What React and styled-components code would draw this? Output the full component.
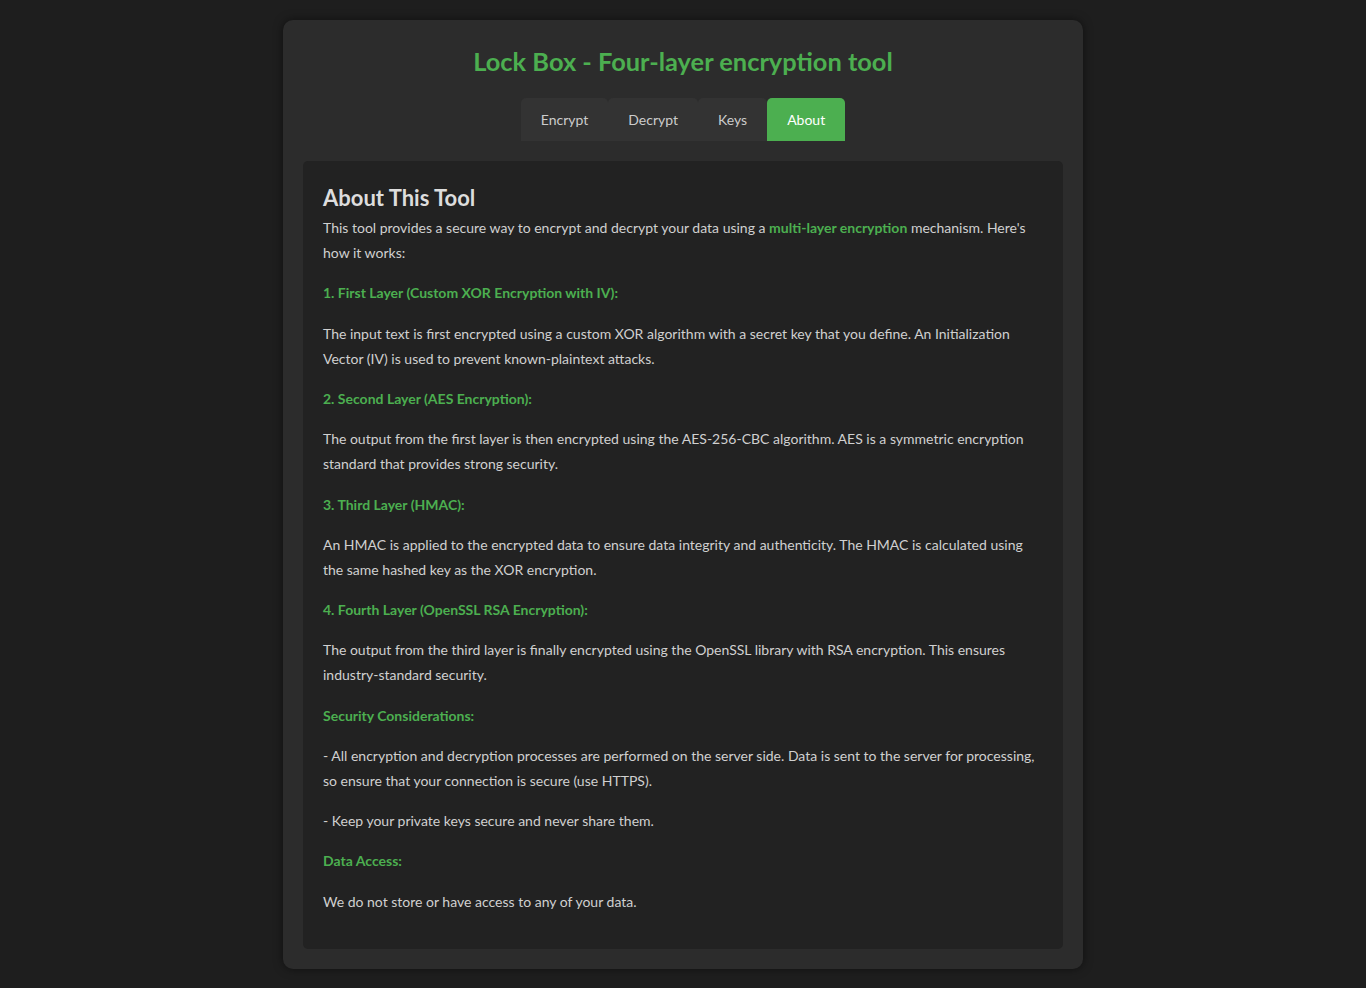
import React, { useState } from 'react'
import styled, { createGlobalStyle } from 'styled-components';

const GlobalStyle = createGlobalStyle`
  body {
    margin: 0;
    background-color: #1e1e1e;
    font-family: Lato, "Open Sans", sans-serif;
    color: #d0d0d0;
  }
`;

const Page = styled.div`
  padding: 20px 0;
  display: flex;
  justify-content: center;
`;

const Container = styled.div`
  width: 800px;
  box-sizing: border-box;
  padding: 20px;
  background-color: #2c2c2c;
  border-radius: 10px;
  box-shadow: 0 0 10px rgba(0, 0, 0, 0.5);
  display: flex;
  flex-direction: column;
  align-items: center;
`;

const Title = styled.h1`
  margin: 0 0 16px;
  font-size: 25.4px;
  line-height: 42px;
  font-weight: 700;
  color: #4caf50;
`;

const Tabs = styled.div`
  display: flex;
  margin-bottom: 20px;
`;

const Tab = styled.button`
  font-family: inherit;
  font-size: 14px;
  height: 43px;
  padding: 0 20px;
  border: none;
  border-radius: 5px 5px 0 0;
  cursor: pointer;
  color: ${(p) => (p.$active ? '#ffffff' : '#cccccc')};
  background-color: ${(p) => (p.$active ? '#4caf50' : '#333333')};
`;

const Panel = styled.div`
  align-self: stretch;
  background-color: #222222;
  border-radius: 5px;
  padding: 20px;
`;

const Heading = styled.h2`
  margin: 0;
  font-size: 22px;
  line-height: 34px;
  color: #dddddd;
`;

const Text = styled.p`
  margin: 15px 0;
  font-size: 14px;
  line-height: 1.8;
  ${Heading} + & {
    margin-top: 0;
  }
`;

const Green = styled.strong`
  color: #4caf50;
`;

const sections = [
  {
    title: '1. First Layer (Custom XOR Encryption with IV):',
    body: ['The input text is first encrypted using a custom XOR algorithm with a secret key that you define. An Initialization Vector (IV) is used to prevent known-plaintext attacks.'],
  },
  {
    title: '2. Second Layer (AES Encryption):',
    body: ['The output from the first layer is then encrypted using the AES-256-CBC algorithm. AES is a symmetric encryption standard that provides strong security.'],
  },
  {
    title: '3. Third Layer (HMAC):',
    body: ['An HMAC is applied to the encrypted data to ensure data integrity and authenticity. The HMAC is calculated using the same hashed key as the XOR encryption.'],
  },
  {
    title: '4. Fourth Layer (OpenSSL RSA Encryption):',
    body: ['The output from the third layer is finally encrypted using the OpenSSL library with RSA encryption. This ensures industry-standard security.'],
  },
  {
    title: 'Security Considerations:',
    body: [
      '- All encryption and decryption processes are performed on the server side. Data is sent to the server for processing, so ensure that your connection is secure (use HTTPS).',
      '- Keep your private keys secure and never share them.',
    ],
  },
  {
    title: 'Data Access:',
    body: ['We do not store or have access to any of your data.'],
  },
];

export default function App() {
  const [tab, setTab] = useState('About');

  return (
    <>
      <GlobalStyle />
      <Page>
        <Container>
          <Title>Lock Box - Four-layer encryption tool</Title>
          <Tabs>
            {['Encrypt', 'Decrypt', 'Keys', 'About'].map((name) => (
              <Tab key={name} $active={tab === name} onClick={() => setTab(name)}>
                {name}
              </Tab>
            ))}
          </Tabs>
          <Panel>
            <Heading>About This Tool</Heading>
            <Text>
              This tool provides a secure way to encrypt and decrypt your data using a{' '}
              <Green>multi-layer encryption</Green> mechanism. Here's how it works:
            </Text>
            {sections.map((s) => (
              <React.Fragment key={s.title}>
                <Text><Green>{s.title}</Green></Text>
                {s.body.map((b) => (
                  <Text key={b}>{b}</Text>
                ))}
              </React.Fragment>
            ))}
          </Panel>
        </Container>
      </Page>
    </>
  )
}
